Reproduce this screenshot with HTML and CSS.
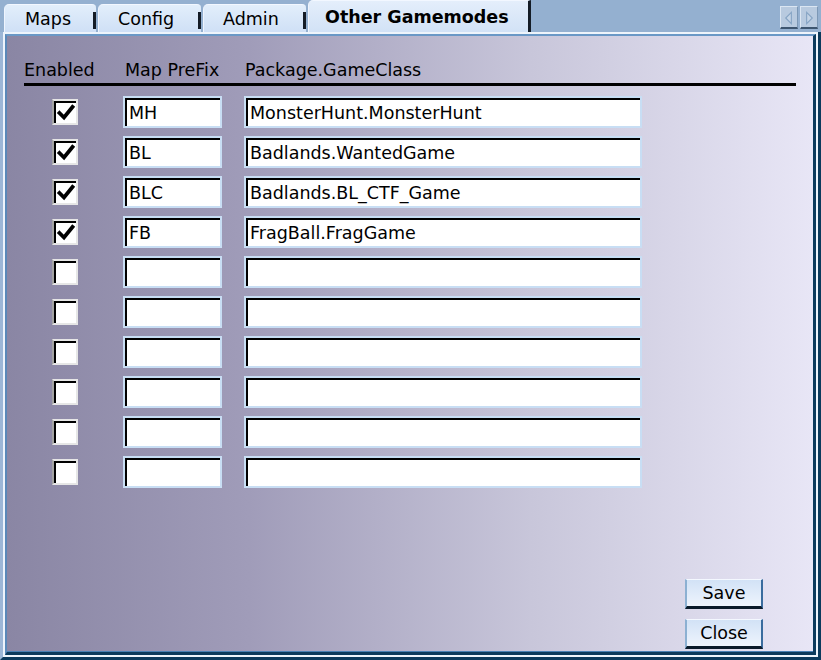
FILE: index.html
```html
<!DOCTYPE html>
<html>
<head>
<meta charset="utf-8">
<link rel="stylesheet" href="styles.css">
</head>
<body>
<div class="tabbar">
  <div class="tab w-maps">Maps</div>
  <div class="tab w-config">Config</div>
  <div class="tab w-admin">Admin</div>
  <div class="tab active">Other Gamemodes</div>
  <div class="scrollers">
    <div class="sbtn"><svg width="17" height="22" viewBox="0 0 17 22"><path d="M11 5 L5 11 L11 17 Z" fill="#c4d4e6" stroke="#86a4c4" stroke-width="1.2"/></svg></div>
    <div class="sbtn"><svg width="17" height="22" viewBox="0 0 17 22"><path d="M6 5 L12 11 L6 17 Z" fill="#c4d4e6" stroke="#86a4c4" stroke-width="1.2"/></svg></div>
  </div>
</div>
<div class="frame">
  <div class="inner">
    <div class="header">
      <span class="h-en">Enabled</span>
      <span class="h-pre">Map PreFix</span>
      <span class="h-pkg">Package.GameClass</span>
    </div>
    <div class="rows">
      <div class="row"><div class="cb"><svg width="20" height="20" viewBox="0 0 20 20"><path d="M3.5 10 L8 14.5 L16.5 4" fill="none" stroke="#000" stroke-width="3.8" stroke-linecap="square"/></svg></div><div class="field pre">MH</div><div class="field pkg">MonsterHunt.MonsterHunt</div></div>
      <div class="row"><div class="cb"><svg width="20" height="20" viewBox="0 0 20 20"><path d="M3.5 10 L8 14.5 L16.5 4" fill="none" stroke="#000" stroke-width="3.8" stroke-linecap="square"/></svg></div><div class="field pre">BL</div><div class="field pkg">Badlands.WantedGame</div></div>
      <div class="row"><div class="cb"><svg width="20" height="20" viewBox="0 0 20 20"><path d="M3.5 10 L8 14.5 L16.5 4" fill="none" stroke="#000" stroke-width="3.8" stroke-linecap="square"/></svg></div><div class="field pre">BLC</div><div class="field pkg">Badlands.BL_CTF_Game</div></div>
      <div class="row"><div class="cb"><svg width="20" height="20" viewBox="0 0 20 20"><path d="M3.5 10 L8 14.5 L16.5 4" fill="none" stroke="#000" stroke-width="3.8" stroke-linecap="square"/></svg></div><div class="field pre">FB</div><div class="field pkg">FragBall.FragGame</div></div>
      <div class="row"><div class="cb"></div><div class="field pre"></div><div class="field pkg"></div></div>
      <div class="row"><div class="cb"></div><div class="field pre"></div><div class="field pkg"></div></div>
      <div class="row"><div class="cb"></div><div class="field pre"></div><div class="field pkg"></div></div>
      <div class="row"><div class="cb"></div><div class="field pre"></div><div class="field pkg"></div></div>
      <div class="row"><div class="cb"></div><div class="field pre"></div><div class="field pkg"></div></div>
      <div class="row"><div class="cb"></div><div class="field pre"></div><div class="field pkg"></div></div>
    </div>
    <div class="spacer"></div>
    <div class="buttons">
      <div class="btn">Save</div>
      <div class="btn">Close</div>
    </div>
  </div>
</div>
</body>
</html>
```
FILE: styles.css
```css
* { box-sizing: border-box; }
html, body {
  margin: 0;
  padding: 0;
}
body {
  width: 821px;
  height: 660px;
  overflow: hidden;
  background: #94b0d0;
  font-family: "DejaVu Sans", sans-serif;
  font-size: 17.5px;
  color: #000;
}
.tabbar {
  height: 32px;
  display: flex;
  align-items: flex-end;
  padding-left: 4px;
}
.tab {
  position: relative;
  height: 28px;
  padding-left: 20px;
  line-height: 29px;
  background: linear-gradient(#e2eefb, #cfe0f6);
  border-top: 1px solid #f2f7ff;
  border-left: 1px solid #eef4fd;
  border-radius: 5px 4px 0 0;
  margin-right: 2px;
}
.tab::after {
  content: "";
  position: absolute;
  right: 0;
  top: 7px;
  width: 3px;
  height: 17px;
  background: #141c26;
}
.w-maps { width: 92px; }
.w-config { width: 103px; padding-left: 19px; }
.w-admin { width: 103px; padding-left: 19px; }
.tab.active {
  height: 32px;
  line-height: 33px;
  width: 223px;
  padding-left: 16px;
  font-weight: bold;
  font-size: 17.5px;
  background: linear-gradient(#e4eefb, #d2e2f6);
  border-right: 3px solid #141c26;
  border-radius: 5px 0 0 0;
}
.tab.active::after { display: none; }
.scrollers {
  margin-left: auto;
  align-self: flex-start;
  margin-top: 6px;
  margin-right: 3px;
  display: flex;
  gap: 2px;
}
.sbtn {
  width: 18px;
  height: 23px;
  background: #b8cadf;
  border-top: 1px solid #dbe6f2;
  border-left: 1px solid #dbe6f2;
  border-right: 1px solid #7c98b6;
  border-bottom: 2px solid #3e5670;
  display: flex;
}
.sbtn svg { display: block; }
.frame {
  height: 628px;
  border-left: 3px solid #9cb6d6;
  border-right: 3px solid #0c3a5c;
  border-bottom: 3px solid #0c3a5c;
  background: #eef4fb;
  padding: 2px;
}
.inner {
  height: 100%;
  border-left: 2px solid #5a88b8;
  border-top: 2px solid #6a98c6;
  border-right: 3px solid #0c3a5c;
  border-bottom: 3px solid #0c3a5c;
  box-shadow: inset 0 -1px 0 #4a80b4;
  background: linear-gradient(to right, #8a86a4 0%, #a09cb9 30%, #c8c6da 65%, #e8e6f6 100%);
  display: flex;
  flex-direction: column;
  padding: 23px 0 0 17px;
}
.header {
  display: flex;
  width: 772px;
  height: 27px;
  border-bottom: 3px solid #000;
  line-height: 22px;
}
.h-en { width: 101px; }
.h-pre { width: 120px; }
.rows {
  display: flex;
  flex-direction: column;
  gap: 8px;
  padding-top: 10px;
}
.row {
  display: flex;
  align-items: center;
  height: 32px;
}
.cb {
  width: 26px;
  height: 26px;
  margin-left: 28px;
  background: #fff;
  border: 2px solid #e6e6e6;
  border-left-color: #a4a4a4;
  box-shadow: inset 2px 2px 0 #000;
  display: flex;
  align-items: center;
  justify-content: center;
  padding: 2px 0 0 2px;
}
.cb svg { display: block; }
.field {
  height: 32px;
  background: #fff;
  border: 2px solid #c8def4;
  box-shadow: inset 2px 2px 0 #000;
  line-height: 31px;
  padding-left: 4px;
  white-space: nowrap;
}
.pre { width: 99px; margin-left: 45px; }
.pkg { width: 398px; margin-left: 22px; }
.spacer { flex: 1; }
.buttons {
  align-self: flex-end;
  margin-right: 50px;
  margin-bottom: 3px;
  display: flex;
  flex-direction: column;
  gap: 10px;
}
.btn {
  width: 78px;
  height: 30px;
  background: linear-gradient(#d2e2f6, #eef4fd);
  border-top: 1px solid #f4f8ff;
  border-left: 2px solid #8cb0d2;
  border-right: 2px solid #3a6c9e;
  border-bottom: 3px solid #0a1a2a;
  text-align: center;
  line-height: 27px;
}
```
